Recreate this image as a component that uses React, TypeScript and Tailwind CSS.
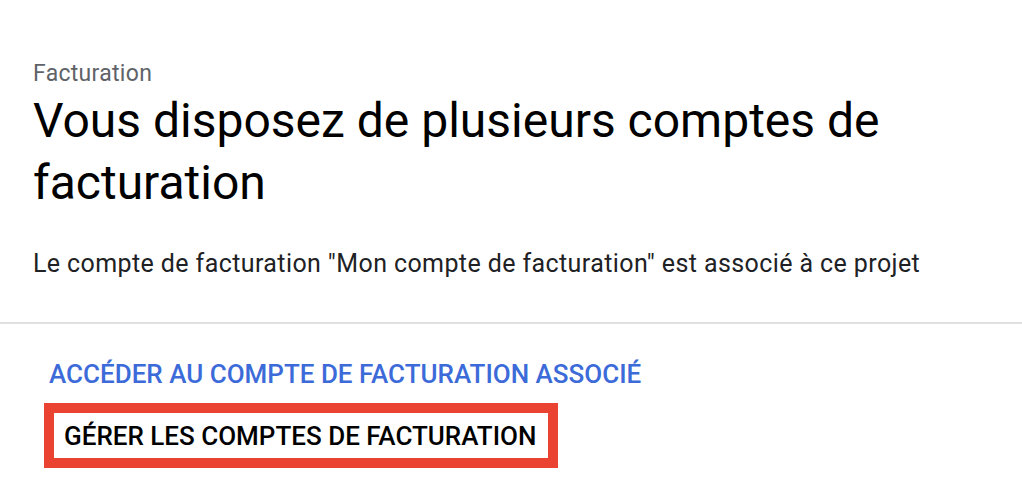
export default function App() {
    return (
        <div className="w-[1022px] h-[482px] bg-white overflow-hidden font-['Roboto',sans-serif]">
            <div className="pl-[33px] pt-[60px] pr-4">
                <div className="text-[23px] leading-[28px] tracking-[0.3px] text-[#5f6368]">Facturation</div>
                <h1 className="mt-[2px] text-[48px] leading-[62px] text-[#000] font-normal">
                    Vous disposez de plusieurs comptes de facturation
                </h1>
                <p className="mt-[34px] text-[25px] leading-[32px] tracking-[0.4px] text-[#202124]">
                    Le compte de facturation "Mon compte de facturation" est associé à ce projet
                </p>
            </div>
            <div className="mt-[42px] h-[2px] bg-[#e0e0e0]"></div>
            <div className="pl-[49px] pt-[34px]">
                <a href="#" className="block text-[26px] leading-[32px] font-medium uppercase text-[#3c6bd9]">
                    Accéder au compte de facturation associé
                </a>
            </div>
            <div className="pl-[44px] mt-[13px]">
                <div className="inline-flex items-center w-[514px] h-[65px] border-[10px] border-[#ea4331] pl-[10px]">
                    <span className="text-[26px] leading-[32px] font-medium uppercase text-black">
                        Gérer les comptes de facturation
                    </span>
                </div>
            </div>
        </div>
    );
}
